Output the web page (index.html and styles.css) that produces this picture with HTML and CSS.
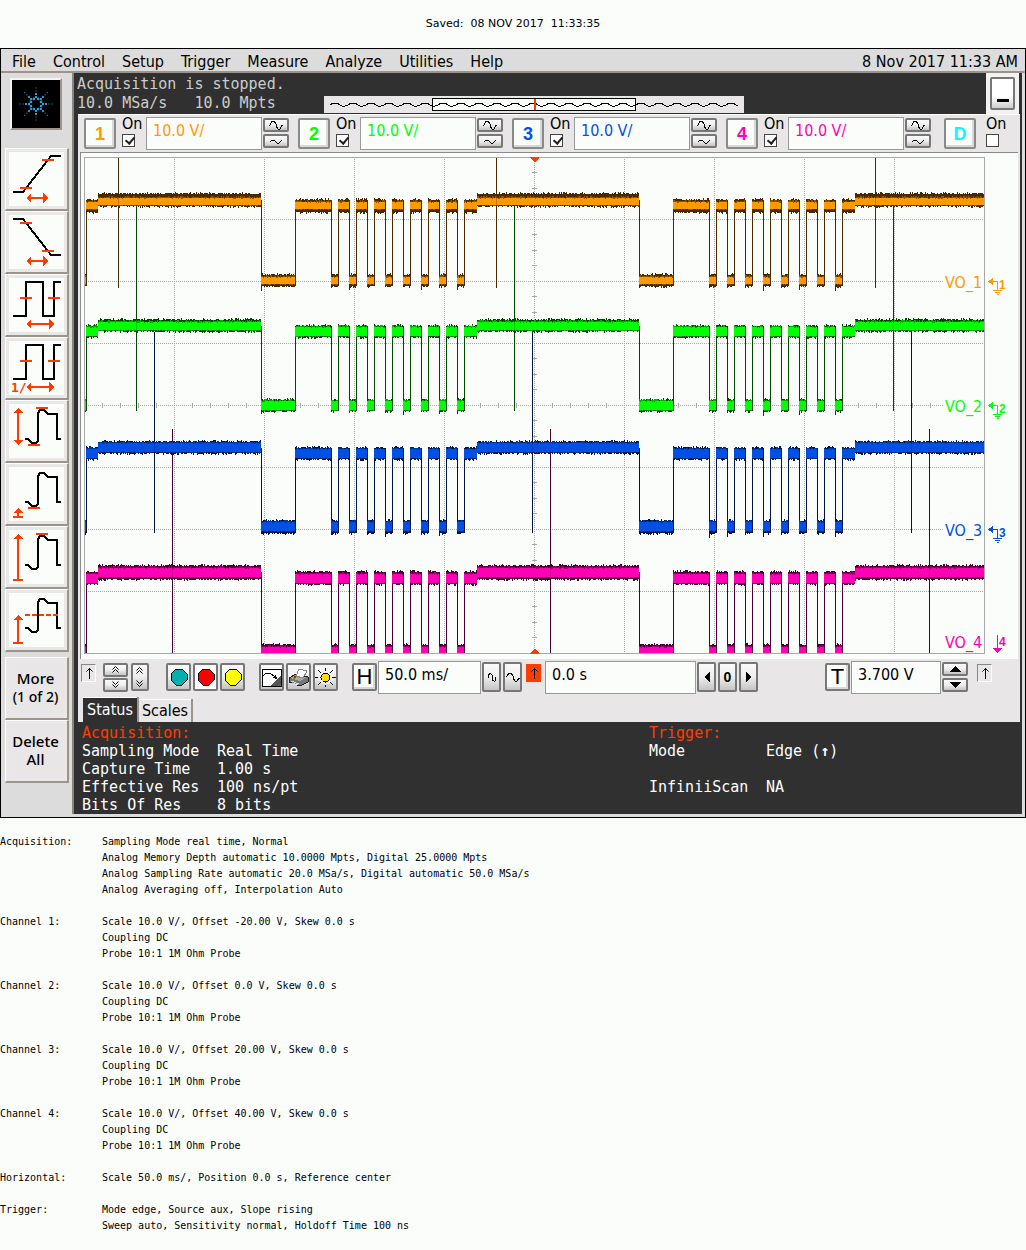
FILE: index.html
```html
<!DOCTYPE html>
<html lang="en">
<head>
<meta charset="utf-8">
<title>Oscilloscope capture</title>
<link rel="stylesheet" href="styles.css">
</head>
<body>
<svg class="defs" width="0" height="0" aria-hidden="true">
  <symbol id="sine-big" viewBox="0 0 14 10"><path d="M0 5H1L3 1H5L7 4V6L9 9H11L13 5H14" fill="none" stroke="#000"/></symbol>
  <symbol id="sine-small" viewBox="0 0 14 10"><path d="M1 6L3 4H5L8 7H10L13 4" fill="none" stroke="#000"/></symbol>
  <symbol id="chev-up" viewBox="0 0 10 8"><path d="M1.5 3.5L4.5 .5L7.5 3.5M1.5 6.5L4.5 3.5L7.5 6.5" fill="none" stroke="#000" shape-rendering="auto"/></symbol>
  <symbol id="chev-down" viewBox="0 0 10 8"><path d="M1.5 .5L4.5 3.5L7.5 .5M1.5 3.5L4.5 6.5L7.5 3.5" fill="none" stroke="#000" shape-rendering="auto"/></symbol>
  <symbol id="edge-up" viewBox="0 0 10 14"><path d="M5.5 13V2M2.5 5.5L5.5 2.5L8.5 5.5" fill="none" stroke="#000" shape-rendering="auto"/></symbol>
  <symbol id="pulse" viewBox="0 0 62 62"><path d="M20 39H23L27 43H31L33 41V13L35 10H39L43 14H52V39H56" fill="none" stroke="#000" stroke-width="2"/></symbol>
</svg>

<p class="saved">Saved:&nbsp; 08 NOV 2017&nbsp; 11:33:35</p>

<main class="scope">
  <nav class="menu">
    <a href="#">File</a><a href="#">Control</a><a href="#">Setup</a><a href="#">Trigger</a><a href="#">Measure</a><a href="#">Analyze</a><a href="#">Utilities</a><a href="#">Help</a>
    <time>8 Nov 2017 11:33 AM</time>
  </nav>
  <div class="body">
    <aside class="side">
      <div class="logo">
        <svg width="48" height="48" viewBox="-24 -24 48 48" id="logo" aria-label="Agilent"></svg>
      </div>
      <button class="tool" aria-label="Rise time"><svg viewBox="0 0 62 62"><path class="k" d="M8 44H18L46 8H56"/><path class="r" d="M15 40H27M37 12H49M23 50H41"/><path class="rf" d="M21 50L26 45V55ZM43 50L38 45V55Z"/></svg></button>
      <button class="tool" aria-label="Fall time"><svg viewBox="0 0 62 62"><path class="k" d="M8 8H18L46 44H56"/><path class="r" d="M15 12H27M37 40H49M23 50H41"/><path class="rf" d="M21 50L26 45V55ZM43 50L38 45V55Z"/></svg></button>
      <button class="tool" aria-label="Period"><svg viewBox="0 0 62 62"><path class="k" d="M8 42H21V8H38V42H49V8H56"/><path class="r" d="M15 24H27M43 24H55M23 50H47"/><path class="rf" d="M21 50L26 45V55ZM49 50L44 45V55Z"/></svg></button>
      <button class="tool" aria-label="Frequency"><svg viewBox="0 0 62 62"><path class="k" d="M8 42H21V8H38V42H49V8H56"/><path class="r" d="M15 24H27M43 24H55M23 50H47"/><path class="rf" d="M21 50L26 45V55ZM49 50L44 45V55Z"/><text class="ratio" x="6" y="55">1/</text></svg></button>
      <button class="tool" aria-label="Peak to peak"><svg viewBox="0 0 62 62"><use href="#pulse"/><path class="r" d="M13 10V43M31 8H43M23 45H35"/><path class="rf" d="M13 8L18 13H8ZM13 45L18 40H8Z"/></svg></button>
      <button class="tool" aria-label="Minimum"><svg viewBox="0 0 62 62"><use href="#pulse"/><path class="r" d="M13 47V54M8 54H18M23 45H35"/><path class="rf" d="M13 45L18 50H8Z"/></svg></button>
      <button class="tool" aria-label="Maximum"><svg viewBox="0 0 62 62"><use href="#pulse"/><path class="r" d="M13 10V54M8 54H18M31 8H43"/><path class="rf" d="M13 8L18 13H8Z"/></svg></button>
      <button class="tool" aria-label="Average"><svg viewBox="0 0 62 62"><use href="#pulse"/><path class="r" d="M13 28V54M8 54H18"/><path class="r dash" d="M20 26H54"/><path class="rf" d="M13 26L18 31H8Z"/></svg></button>
      <button class="tool text first">More<br><small>(1 of 2)</small></button>
      <button class="tool text">Delete<br>All</button>
    </aside>

    <section class="main">
      <header class="top">
        <div class="acq">Acquisition is stopped.<br>10.0 MSa/s&nbsp;&nbsp; 10.0 Mpts</div>
        <div class="overview"><svg viewBox="324 96 420 17" id="overview"><rect x="324" y="96" width="420" height="17" fill="#e8e6e6"/><rect x="432.5" y="98.5" width="203" height="12" fill="#fbfdfb" stroke="#000"/></svg></div>
        <div class="min"><button aria-label="Minimize"></button></div>
      </header>

      <div class="panel">
        <div class="channels">
          <div class="ch c1"><button class="num">1</button><label>On<input type="checkbox" checked></label><input type="text" value="10.0 V/" aria-label="Channel 1 scale"><span class="stack"><button aria-label="Increase"><svg><use href="#sine-big"/></svg></button><button aria-label="Decrease"><svg><use href="#sine-small"/></svg></button></span></div>
          <div class="ch c2"><button class="num">2</button><label>On<input type="checkbox" checked></label><input type="text" value="10.0 V/" aria-label="Channel 2 scale"><span class="stack"><button aria-label="Increase"><svg><use href="#sine-big"/></svg></button><button aria-label="Decrease"><svg><use href="#sine-small"/></svg></button></span></div>
          <div class="ch c3"><button class="num">3</button><label>On<input type="checkbox" checked></label><input type="text" value="10.0 V/" aria-label="Channel 3 scale"><span class="stack"><button aria-label="Increase"><svg><use href="#sine-big"/></svg></button><button aria-label="Decrease"><svg><use href="#sine-small"/></svg></button></span></div>
          <div class="ch c4"><button class="num">4</button><label>On<input type="checkbox" checked></label><input type="text" value="10.0 V/" aria-label="Channel 4 scale"><span class="stack"><button aria-label="Increase"><svg><use href="#sine-big"/></svg></button><button aria-label="Decrease"><svg><use href="#sine-small"/></svg></button></span></div>
          <div class="ch digital"><button class="num">D</button><label>On<input type="checkbox"></label></div>
        </div>

        <div class="plot"><svg id="plot" viewBox="81 153 937 506"></svg></div>

        <div class="controls">
          <span class="edge"><svg><use href="#edge-up"/></svg></span>
          <span class="stack narrow"><button aria-label="Up"><svg><use href="#chev-up"/></svg></button><button aria-label="Down"><svg><use href="#chev-down"/></svg></button></span>
          <button class="tall pair" aria-label="Scroll"><svg><use href="#chev-up"/></svg><svg><use href="#chev-down"/></svg></button>
          <span class="group">
            <button class="sq" aria-label="Run"><svg viewBox="0 0 18 18"><path d="M6 1H12L17 6V12L12 17H6L1 12V6Z" fill="#00b0b0" stroke="#000"/></svg></button>
            <button class="sq pressed" aria-label="Stop"><svg viewBox="0 0 18 18"><path d="M6 1H12L17 6V12L12 17H6L1 12V6Z" fill="#f00" stroke="#000"/></svg></button>
            <button class="sq" aria-label="Single"><svg viewBox="0 0 18 18"><path d="M6 1H12L17 6V12L12 17H6L1 12V6Z" fill="#ff0" stroke="#000"/></svg></button>
          </span>
          <span class="group">
            <button class="sq" aria-label="Clear display"><svg class="wide" viewBox="0 0 21 19"><path d="M1 1H20V18H1Z" fill="#fff" stroke="#000"/><path d="M20 8V18H9Z" fill="#555"/><path d="M2 8L5 5H9L14 9" fill="none" stroke="#000"/><path d="M16 11L15 6L11 10Z"/></svg></button>
            <button class="sq" aria-label="Print"><svg class="wide" viewBox="0 0 21 19"><path d="M1 10L8 6L20 9V14L12 18L1 14Z" fill="#777" stroke="#222"/><path d="M2 10L8 7L19 9L12 13Z" fill="#aaa"/><path d="M8 8L11 1L19 3L15 10Z" fill="#fff" stroke="#888"/><path d="M3 13L11 16M3 15L10 17" stroke="#ddd"/><path d="M6 9H8" stroke="#f00" stroke-width="2"/><path d="M5 11H7" stroke="#0c0" stroke-width="2"/></svg></button>
            <button class="sq" aria-label="Intensity"><svg class="wide" viewBox="0 0 21 19"><path d="M10.5 0V19M0 9.5H21M3 2L18 17M18 2L3 17" stroke="#000"/><circle cx="10.5" cy="9.5" r="7" fill="#eee"/><circle cx="10.5" cy="9.5" r="4.5" fill="#fd0" stroke="#000"/></svg></button>
          </span>
          <button class="sq letter h">H</button>
          <input class="time" type="text" value="50.0 ms/" aria-label="Time scale">
          <button class="slim" aria-label="Zoom in"><svg viewBox="0 0 14 14"><path d="M3.5 8V4.5L5.5 3.5L7.5 5.5V10L9.5 11.5L10.5 10.5V7" fill="none" stroke="#000"/></svg></button>
          <button class="slim" aria-label="Zoom out"><svg viewBox="0 0 14 14"><path d="M0 6H1L3 3H5L7 6V8L9 11H11L13 8H14" fill="none" stroke="#000"/></svg></button>
          <span class="edge hot"><svg><use href="#edge-up"/></svg></span>
          <input class="pos" type="text" value="0.0 s" aria-label="Time position">
          <button class="slim" aria-label="Left"><svg viewBox="0 0 14 14"><path d="M10 2V12L4 7Z"/></svg></button>
          <button class="slim zero">0</button>
          <button class="slim" aria-label="Right"><svg viewBox="0 0 14 14"><path d="M4 2V12L10 7Z"/></svg></button>
          <button class="sq letter t">T</button>
          <input class="level" type="text" value="3.700 V" aria-label="Trigger level">
          <span class="stack"><button aria-label="Level up"><svg viewBox="0 0 14 10"><path d="M1 8H13L7 2Z"/></svg></button><button aria-label="Level down"><svg viewBox="0 0 14 10"><path d="M1 2H13L7 8Z"/></svg></button></span>
          <span class="edge last"><svg><use href="#edge-up"/></svg></span>
        </div>

        <div class="tabs"><button class="on">Status</button><button>Scales</button></div>
      </div>

      <div class="status">
        <table>
          <colgroup><col class="name"><col></colgroup>
          <tr><th colspan="2">Acquisition:</th></tr>
          <tr><td>Sampling Mode</td><td>Real Time</td></tr>
          <tr><td>Capture Time</td><td>1.00 s</td></tr>
          <tr><td>Effective Res</td><td>100 ns/pt</td></tr>
          <tr><td>Bits Of Res</td><td>8 bits</td></tr>
        </table>
        <table class="trig">
          <colgroup><col class="name"><col></colgroup>
          <tr><th colspan="2">Trigger:</th></tr>
          <tr><td>Mode</td><td>Edge (<b>↑</b>)</td></tr>
          <tr><td>&nbsp;</td><td></td></tr>
          <tr><td>InfiniiScan</td><td>NA</td></tr>
        </table>
      </div>
    </section>
  </div>
</main>

<dl class="log">
  <dt>Acquisition:</dt>
  <dd>Sampling Mode real time, Normal<br>Analog Memory Depth automatic 10.0000 Mpts, Digital 25.0000 Mpts<br>Analog Sampling Rate automatic 20.0 MSa/s, Digital automatic 50.0 MSa/s<br>Analog Averaging off, Interpolation Auto</dd>
  <dt>Channel 1:</dt>
  <dd>Scale 10.0 V/, Offset -20.00 V, Skew 0.0 s<br>Coupling DC<br>Probe 10:1 1M Ohm Probe</dd>
  <dt>Channel 2:</dt>
  <dd>Scale 10.0 V/, Offset 0.0 V, Skew 0.0 s<br>Coupling DC<br>Probe 10:1 1M Ohm Probe</dd>
  <dt>Channel 3:</dt>
  <dd>Scale 10.0 V/, Offset 20.00 V, Skew 0.0 s<br>Coupling DC<br>Probe 10:1 1M Ohm Probe</dd>
  <dt>Channel 4:</dt>
  <dd>Scale 10.0 V/, Offset 40.00 V, Skew 0.0 s<br>Coupling DC<br>Probe 10:1 1M Ohm Probe</dd>
  <dt>Horizontal:</dt>
  <dd>Scale 50.0 ms/, Position 0.0 s, Reference center</dd>
  <dt>Trigger:</dt>
  <dd>Mode edge, Source aux, Slope rising<br>Sweep auto, Sensitivity normal, Holdoff Time 100 ns</dd>
</dl>
<script src="plot.js"></script>
</body>
</html>
```
FILE: styles.css
```css
* { box-sizing: border-box; }
:root {
  --ui: "DejaVu Sans Condensed", "Noto Sans", sans-serif;
  --mono: "DejaVu Sans Mono", monospace;
  --paper: #fbfdfb;
  --panel: #e8e6e6;
  --dark: #303030;
  --red: #ff3c00;
}
body { margin: 0; background: var(--paper); color: #000; font-family: var(--ui); font-size: 16px; }
.defs { display: block; }
button, input { font: inherit; margin: 0; }
button { padding: 0; }
svg { display: block; shape-rendering: crispEdges; }

.saved { margin: 0; padding: 16px 0 0; height: 48px; text-align: center; font: 11px/16px "DejaVu Sans", sans-serif; }

.scope { border: 1px solid #000; background: #dcdcdc; }
.menu { display: flex; gap: 17px; height: 24px; padding: 0 7px 0 11px; line-height: 25px; border-bottom: 2px solid #9b948b; }
.menu a { color: #000; text-decoration: none; }
.menu time { margin-left: auto; }
.body { display: flex; padding: 0 3px 3px 0; }

.side { width: 73px; flex: none; padding: 5px 0 0 4px; border-right: 2px solid #8a847e; }
.logo { width: 52px; height: 52px; margin: 0 0 18px 5px; background: #000; border: 2px solid #f6f4f2; border-right-color: #9b948b; border-bottom-color: #9b948b; }
.tool { display: block; width: 64px; height: 63px; background: var(--paper); border: 1px solid #fff; border-right: 2px solid #9b948b; border-bottom: 2px solid #9b948b; box-shadow: inset 0 0 0 3px #eae8e6; }
.tool svg { width: 62px; height: 62px; margin: -1px; }
.tool.text { background: var(--panel); font: 500 15px/18px "Noto Sans", sans-serif; padding: 0 2px 2px 0; }
.tool.text small { font-size: 14px; }
.tool.first { margin-top: 5px; }
.k { fill: none; stroke: #000; stroke-width: 2; }
.r { fill: none; stroke: var(--red); stroke-width: 2; }
.rf { fill: var(--red); }
.dash { stroke-dasharray: 5 2; }
.ratio { fill: var(--red); font: bold 13px var(--mono); }

.main { flex: 1; min-width: 0; background: var(--dark); }
.top { display: flex; height: 41px; color: #ccc; }
.acq { width: 250px; padding: 2px 0 0 3px; font: 15px/19px var(--mono); white-space: nowrap; }
.overview { flex: 1; padding-top: 23px; }
.overview svg { width: 100%; height: 17px; }
.min { width: 33px; margin: 0 3px 0 242px; padding: 4px; background: #f4f2f0; }
.min button { display: block; width: 25px; height: 33px; border: 2px solid #777; border-radius: 2px; background: linear-gradient(#fff, #fff 60%, #ccc); }
.min button::before { content: ""; display: block; width: 12px; height: 3px; margin: 14px auto 0; background: #000; }

.panel { margin: 0 2px 0 4px; background: var(--panel); border-top: 1px solid #fff; }
.channels { display: flex; height: 37px; padding: 2px 0 0 6px; }
.ch { display: flex; flex: 1; padding-right: 9px; min-width: 0; }
.c1 { color: #ff9900; } .c2 { color: #00ff00; } .c3 { color: #0050e6; } .c4 { color: #ff00b4; }
.num { width: 32px; height: 31px; margin-top: 1px; color: inherit; background: var(--paper); border: 2px solid #8a8a8a; border-radius: 2px; box-shadow: inset -2px -2px #d8d8d8; font: bold 18px/26px "Liberation Sans", sans-serif; }
.ch label { width: 30px; padding-left: 6px; color: #000; line-height: 14px; }
.ch label input { appearance: none; display: block; width: 13px; height: 13px; margin: 3px 0 0; background: #fff; border: 1px solid #444; }
.ch label input:checked::after { content: ""; display: block; width: 4px; height: 7px; margin: 0 0 0 4px; border: solid #222; border-width: 0 2px 2px 0; transform: rotate(40deg); }
.ch.digital { flex: none; width: 80px; padding: 0 0 0 4px; color: #00ffff; }
.digital label { width: 36px; padding-left: 10px; }
input[type="text"] { height: 33px; min-width: 0; padding: 0 6px 6px; color: inherit; background: var(--paper); border: 1px solid #999; font-size: 16px; }
.ch input[type="text"] { flex: 1; margin-right: 1px; }
.stack { display: flex; flex-direction: column; gap: 2px; width: 26px; padding-top: 1px; }
.stack button, .tall, .sq, .slim { color: #000; border: 2px solid #777; border-radius: 2px; background: linear-gradient(#fafafa, #eee 50%, #c4c4c4); display: flex; align-items: center; justify-content: center; }
.stack button { height: 14px; }
.stack svg { width: 14px; height: 10px; flex: none; }

.plot { margin: 0 2px; border: solid #8a8a8a; border-width: 1px 0 0 1px; background: var(--paper); }
.plot svg { width: 100%; height: auto; }
.plot text { font: 16px var(--ui); }
.plot .mark { font: bold 12px "Liberation Sans", sans-serif; }

.controls { display: flex; height: 38px; padding: 2px 0 0 3px; }
.edge { width: 15px; height: 18px; margin-top: 3px; padding: 1px 2px; border: 1px solid #888; border-right-color: #fff; border-bottom-color: #fff; }
.edge svg { width: 10px; height: 14px; }
.hot { background: var(--red); border-color: var(--red); margin: 3px 4px 0 3px; }
.stack.narrow { width: 25px; margin: 0 3px 0 7px; padding-top: 2px; gap: 1px; }
.narrow svg, .pair svg { width: 10px; height: 8px; }
.tall { width: 18px; height: 28px; margin-top: 2px; }
.pair { flex-direction: column; gap: 5px; }
.group { display: flex; gap: 2px; margin: 2px 0 0 17px; }
.group + .group { margin-left: 14px; }
.sq { width: 25px; height: 28px; flex: none; }
.sq svg { width: 18px; height: 18px; flex: none; }
.sq .wide { width: 21px; height: 19px; }
.pressed { background: #fff; }
.letter { font: 22px/20px "Liberation Sans", sans-serif; background: var(--paper); box-shadow: inset -2px -2px #d8d8d8; }
.h { margin: 2px 1px 0 14px; }
.t { margin: 2px 1px 0 auto; }
.slim { width: 19px; height: 30px; margin: 1px 1px 0; flex: none; }
.slim svg { width: 14px; height: 14px; flex: none; }
.zero { font: bold 14px/20px "Liberation Sans", sans-serif; }
.time { width: 103px; }
.pos { width: 151px; }
.level { width: 90px; margin-right: 1px; }
.last { margin: 3px 28px 0 9px; }

.tabs { display: flex; align-items: flex-end; height: 25px; padding-left: 5px; }
.tabs button { height: 23px; width: 54px; border: solid #9b948b; border-width: 0 2px 0 0; background: var(--panel); box-shadow: inset 0 1px #fff; color: #000; }
.tabs .on { height: 25px; width: 56px; background: var(--dark); color: #fff; }

.status { display: flex; padding: 2px 0 0 8px; min-height: 92px; color: #fff; font: 15px/18px var(--mono); }
.status table { border-collapse: collapse; width: 567px; table-layout: fixed; height: max-content; }
.status .trig { width: 300px; }
.status td, .status th { padding: 0; height: 18px; text-align: left; font-weight: normal; white-space: nowrap; }
.status th { color: var(--red); }
.name { width: 135px; }
.trig .name { width: 117px; }

.log { display: grid; grid-template-columns: 102px 1fr; row-gap: 16px; margin: 0; padding: 16px 0; font: 10px/16px var(--mono); }
.log dd { margin: 0; }
```
FILE: plot.js
```js
(function () {
  var NS = 'http://www.w3.org/2000/svg';
  function add(svg, tag, attrs, text) {
    var el = document.createElementNS(NS, tag);
    for (var k in attrs) el.setAttribute(k, attrs[k]);
    if (text) el.textContent = text;
    svg.appendChild(el);
  }
  var seed = 7;
  function rnd() { seed = (seed * 16807) % 2147483647; return seed / 2147483647; }

  // Graticule
  var plot = document.getElementById('plot');
  var i, j;
  for (i = 1; i < 10; i++) add(plot, 'path', { d: 'M' + (84.5 + i * 90) + ' 159V653', stroke: '#a8a8a8', 'stroke-dasharray': '1 1' });
  for (j = 1; j < 8; j++) add(plot, 'path', { d: 'M88 ' + (157.5 + j * 62) + 'H' + (j % 2 ? 984 : 943), stroke: '#a8a8a8', 'stroke-dasharray': '1 1' });
  var ticks = '';
  for (i = 1; i < 48; i++) if (i % 5) ticks += 'M' + (84.5 + i * 18) + ' 403V408';
  for (j = 1; j < 32; j++) if (j % 4) ticks += 'M532 ' + Math.floor(157 + j * 15.5) + '.5H537';
  add(plot, 'path', { d: ticks, stroke: '#a8a8a8' });

  // Level sequence shared by all the channels: [level, start x]
  var seq = [['low', 84], ['mid', 86], ['high', 98]];
  [[261, 295, 331, 477], [639, 673, 709, 855]].forEach(function (p) {
    seq.push(['low', p[0]], ['mid', p[1]]);
    for (var k = 0; k < 8; k++) seq.push(['low', p[2] + k * 18], ['mid', p[2] + 7 + k * 18]);
    seq.push(['high', p[3]]);
  });

  var channels = [
    { bright: '#ff00b4', half: '#a00070', dark: '#480034', high: [566, 579, 568, 577], mid: [572, 584, 574, 583], low: [645, 653, 647, 653], spikes: 172, from: 429, to: 653 },
    { bright: '#0050e6', half: '#0038a0', dark: '#001440', high: [442, 453, 443, 452], mid: [448, 459, 449, 458], low: [521, 533, 522, 531], spikes: 154, from: 332, to: 533 },
    { bright: '#00ff00', half: '#00b000', dark: '#004800', high: [320, 331, 322, 330], mid: [326, 337, 327, 336], low: [400, 411, 401, 410], spikes: 136, from: 207, to: 411 },
    { bright: '#ff9900', half: '#905400', dark: '#482a00', high: [194, 206, 198, 205], mid: [200, 212, 202, 209], low: [275, 286, 277, 284], spikes: 118, from: 157, to: 288 }
  ];
  channels.forEach(function (c) {
    var dark = '', half = '', core = '', edges = '', spikes = '';
    seq.forEach(function (s, n) {
      var b = c[s[0]], x0 = s[1], x1 = n + 1 < seq.length ? seq[n + 1][1] : 984;
      for (var x = x0; x < x1; x++) {
        var up = rnd() < 0.1 ? 2 : Math.round(rnd());
        var dn = rnd() < 0.1 ? 2 : Math.round(rnd());
        var bottom = Math.min(653, b[1] + dn);
        dark += 'M' + (x + 0.5) + ' ' + (b[0] - up) + 'V' + bottom;
        half += 'M' + (x + 0.5) + ' ' + (b[2] - Math.round(rnd() * 2)) + 'V' + Math.min(653, b[3] + Math.round(rnd()));
        core += 'M' + (x + 0.5) + ' ' + (b[2] + Math.round(rnd() * 0.6)) + 'V' + b[3];
      }
      if (n && !(s[0] === 'high' || (seq[n - 1][0] === 'high' && s[0] === 'mid'))) {
        var over = s[0] === 'low' ? Math.min(653, c.low[1] + Math.round(rnd() * 5)) : c.low[1];
        edges += 'M' + (x0 + 0.5) + ' ' + c.mid[0] + 'V' + over;
      }
    });
    [0, 378, 757].forEach(function (dx) { spikes += 'M' + (c.spikes + dx + 0.5) + ' ' + c.from + 'V' + c.to; });
    add(plot, 'path', { d: edges + spikes, stroke: c.dark, fill: 'none' });
    add(plot, 'path', { d: dark, stroke: c.dark });
    add(plot, 'path', { d: half, stroke: c.half });
    add(plot, 'path', { d: core, stroke: c.bright });
    add(plot, 'path', { d: spikes, stroke: c.dark, opacity: 0.3 });
  });

  add(plot, 'rect', { x: 84.5, y: 157.5, width: 900, height: 496, fill: 'none', stroke: '#a8a8a8' });
  add(plot, 'path', { d: 'M530 157H539V158L535 162H534L530 158ZM530 654H539V653L535 649H534L530 653Z', fill: '#ff3c00' });

  // Channel labels and ground markers
  [['#ff9900', 281, 288], ['#00ff00', 405, 412], ['#0050e6', 529, 536]].forEach(function (m, n) {
    var y = m[1] + 0.5;
    add(plot, 'text', { x: 945, y: m[2], fill: m[0] }, 'VO_' + (n + 1));
    add(plot, 'path', { d: 'M988 ' + y + 'l5 -4v8z', fill: m[0] });
    add(plot, 'path', { d: 'M992 ' + y + 'h5.5v8.5M993 ' + (y + 9) + 'h9M995 ' + (y + 11) + 'h5M997 ' + (y + 13) + 'h2', stroke: m[0], fill: 'none' });
    add(plot, 'text', { x: 999, y: m[1] + 8, fill: m[0], 'class': 'mark' }, String(n + 1));
  });
  add(plot, 'text', { x: 945, y: 648, fill: '#ff00b4' }, 'VO_4');
  add(plot, 'path', { d: 'M997.5 635V650', stroke: '#ff00b4' });
  add(plot, 'path', { d: 'M993 648H1002L997.5 653Z', fill: '#ff00b4' });
  add(plot, 'text', { x: 999, y: 646, fill: '#ff00b4', 'class': 'mark' }, '4');

  // Memory overview strip
  var ov = document.getElementById('overview');
  var d = 'M330 105';
  for (i = 0; i < 23; i++) d += 'l3 -2h4l3 2l2 1h3l3 -1';
  add(ov, 'path', { d: d.replace(/h3l3 -1$/, ''), stroke: '#000', fill: 'none' });
  add(ov, 'path', { d: 'M535 99V110', stroke: '#ff3c00', 'stroke-width': 2 });

  // Starburst logo: a ring of dots with eight rays of shrinking dots
  var logo = document.getElementById('logo');
  for (i = 0; i < 8; i++) {
    var a = i * Math.PI / 4, b = a + Math.PI / 8;
    add(logo, 'circle', { cx: 5.5 * Math.cos(b), cy: 5.5 * Math.sin(b), r: 1.4, fill: '#2a9fd8', 'shape-rendering': 'auto' });
    [7, 10, 13, 16].forEach(function (r, n) {
      var w = [2, 2, 1, 1][n];
      add(logo, 'rect', { x: r * Math.cos(a) - w / 2, y: r * Math.sin(a) - w / 2, width: w, height: w, fill: '#2a9fd8', 'shape-rendering': 'auto' });
    });
  }
})();
```
